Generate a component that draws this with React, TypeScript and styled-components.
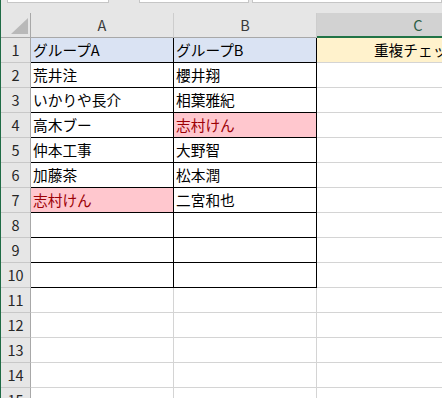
import React from "react";
import styled, { createGlobalStyle } from "styled-components";

const Global = createGlobalStyle`
  html, body { margin: 0; padding: 0; background: #ffffff; overflow: hidden; }
  * { box-sizing: border-box; }
`;

const Window = styled.div`
  width: 442px;
  height: 398px;
  overflow: hidden;
  border-left: 1px solid #1f6b45;
  background: #ffffff;
  display: flex;
  flex-direction: column;
  font-family: "Noto Sans CJK JP", "Noto Sans", sans-serif;
`;

const TopStrip = styled.div`
  height: 13px;
  flex: none;
  background: #e6e6e6;
  display: flex;
  align-items: flex-start;
  padding-left: 6px;
`;

const FieldBox = styled.div<{ $w?: number; $gap: number }>`
  height: 3px;
  background: #ffffff;
  border: 1px solid #c6c6c6;
  border-top: none;
  margin-right: ${(p) => p.$gap}px;
  ${(p) => (p.$w ? `width: ${p.$w}px; flex: none;` : "flex: 1;")}
`;

const Sheet = styled.div`
  display: grid;
  grid-template-columns: 30px 143px 143px 203px;
  grid-auto-rows: 25px;
  width: 519px;
`;

const Corner = styled.div`
  background: #e6e6e6;
  border-right: 1px solid #a8a8a8;
  border-bottom: 1px solid #a8a8a8;
  display: flex;
  justify-content: flex-end;
  align-items: flex-end;
  padding: 0 2px 3px 0;
`;

const Triangle = styled.div`
  width: 17px;
  height: 16px;
  background: #b9b9b9;
  clip-path: polygon(100% 0, 100% 100%, 0 100%);
`;

const ColHead = styled.div<{ $selected?: boolean }>`
  background: ${(p) => (p.$selected ? "#d2d2d2" : "#e6e6e6")};
  color: ${(p) => (p.$selected ? "#2c5e45" : "#3a3a3a")};
  border-right: 1px solid ${(p) => (p.$selected ? "#c0c0c0" : "#cdcdcd")};
  border-bottom: ${(p) => (p.$selected ? "2px solid #217346" : "1px solid #a8a8a8")};
  display: flex;
  align-items: center;
  justify-content: center;
  font-family: "Noto Sans CJK JP", "Liberation Sans", sans-serif;
  font-size: 14.5px;
  line-height: 1;
  padding-top: ${(p) => (p.$selected ? "1px" : "0")};
`;

const RowHead = styled.div`
  background: #e6e6e6;
  color: #262626;
  border-right: 1px solid #a8a8a8;
  border-bottom: 1px solid #c8c8c8;
  display: flex;
  align-items: center;
  justify-content: center;
  font-family: "Noto Sans CJK JP", sans-serif;
  font-size: 14.5px;
  line-height: 1;
`;

const Cell = styled.div<{
  $bg: string;
  $color: string;
  $right: string;
  $bottom: string;
  $center?: boolean;
}>`
  background: ${(p) => p.$bg};
  color: ${(p) => p.$color};
  border-right: 1px solid ${(p) => p.$right};
  border-bottom: 1px solid ${(p) => p.$bottom};
  display: flex;
  align-items: center;
  justify-content: ${(p) => (p.$center ? "center" : "flex-start")};
  padding-left: ${(p) => (p.$center ? "0" : "2px")};
  font-size: 14.7px;
  line-height: 1;
  white-space: nowrap;
  overflow: hidden;
`;

const BLUE = "#dae3f3";
const PINK = "#ffc7ce";
const YELLOW = "#fff2cc";
const BLACK = "#000000";
const GRID = "#d4d4d4";

type CellData = { text: string; bg?: string; color?: string };

const colA: CellData[] = [
  { text: "グループA", bg: BLUE },
  { text: "荒井注" },
  { text: "いかりや長介" },
  { text: "高木ブー" },
  { text: "仲本工事" },
  { text: "加藤茶" },
  { text: "志村けん", bg: PINK, color: "#9c0006" },
];

const colB: CellData[] = [
  { text: "グループB", bg: BLUE },
  { text: "櫻井翔" },
  { text: "相葉雅紀" },
  { text: "志村けん", bg: PINK, color: "#9c0006" },
  { text: "大野智" },
  { text: "松本潤" },
  { text: "二宮和也" },
];

const ROWS = 15;

export default function App() {
  const rows = Array.from({ length: ROWS }, (_, i) => i + 1);
  return (
    <>
      <Global />
      <Window>
        <TopStrip>
          <FieldBox $w={102} $gap={30} />
          <FieldBox $w={110} $gap={3} />
          <FieldBox $gap={0} />
        </TopStrip>
        <Sheet>
          <Corner>
            <Triangle />
          </Corner>
          <ColHead>A</ColHead>
          <ColHead>B</ColHead>
          <ColHead $selected>C</ColHead>
          {rows.map((r) => {
            const a = colA[r - 1];
            const b = colB[r - 1];
            const inTable = r <= 10;
            const edge = inTable ? BLACK : GRID;
            return (
              <React.Fragment key={r}>
                <RowHead>{r}</RowHead>
                <Cell
                  $bg={a?.bg ?? "#ffffff"}
                  $color={a?.color ?? "#000000"}
                  $right={edge}
                  $bottom={edge}
                >
                  {a?.text ?? ""}
                </Cell>
                <Cell
                  $bg={b?.bg ?? "#ffffff"}
                  $color={b?.color ?? "#000000"}
                  $right={edge}
                  $bottom={edge}
                >
                  {b?.text ?? ""}
                </Cell>
                <Cell
                  $bg={r === 1 ? YELLOW : "#ffffff"}
                  $color="#000000"
                  $right={GRID}
                  $bottom={GRID}
                  $center
                >
                  {r === 1 ? "重複チェック" : ""}
                </Cell>
              </React.Fragment>
            );
          })}
        </Sheet>
      </Window>
    </>
  );
}
